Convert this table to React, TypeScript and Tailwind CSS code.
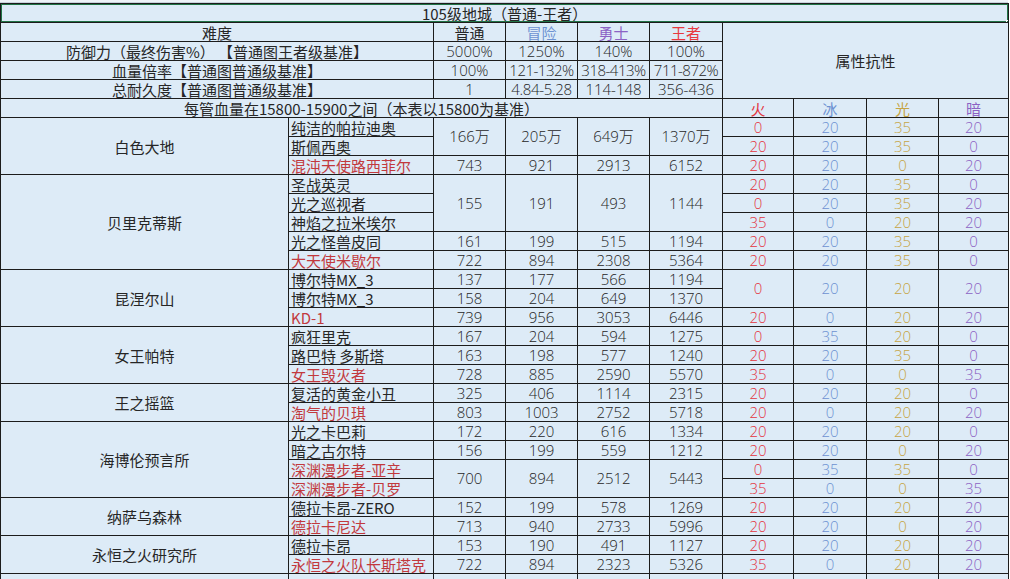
import React from "react";

type Row = {
  group?: [string, number];
  name: string;
  red?: boolean;
  nums?: [string[], number];
  attrs?: [string[], number];
};

const rows: Row[] = [
  { group: ["白色大地", 3], name: "纯洁的帕拉迪奥", nums: [["166万", "205万", "649万", "1370万"], 2], attrs: [["0", "20", "35", "20"], 1] },
  { name: "斯佩西奥", attrs: [["20", "20", "35", "0"], 1] },
  { name: "混沌天使路西菲尔", red: true, nums: [["743", "921", "2913", "6152"], 1], attrs: [["20", "20", "0", "20"], 1] },
  { group: ["贝里克蒂斯", 5], name: "圣战英灵", nums: [["155", "191", "493", "1144"], 3], attrs: [["20", "20", "35", "0"], 1] },
  { name: "光之巡视者", attrs: [["0", "20", "35", "20"], 1] },
  { name: "神焰之拉米埃尔", attrs: [["35", "0", "20", "20"], 1] },
  { name: "光之怪兽皮同", nums: [["161", "199", "515", "1194"], 1], attrs: [["20", "20", "35", "0"], 1] },
  { name: "大天使米歇尔", red: true, nums: [["722", "894", "2308", "5364"], 1], attrs: [["20", "20", "35", "0"], 1] },
  { group: ["昆涅尔山", 3], name: "博尔特MX_3", nums: [["137", "177", "566", "1194"], 1], attrs: [["0", "20", "20", "20"], 2] },
  { name: "博尔特MX_3", nums: [["158", "204", "649", "1370"], 1] },
  { name: "KD-1", red: true, nums: [["739", "956", "3053", "6446"], 1], attrs: [["20", "0", "20", "20"], 1] },
  { group: ["女王帕特", 3], name: "疯狂里克", nums: [["167", "204", "594", "1275"], 1], attrs: [["0", "35", "20", "0"], 1] },
  { name: "路巴特 多斯塔", nums: [["163", "198", "577", "1240"], 1], attrs: [["20", "20", "35", "0"], 1] },
  { name: "女王毁灭者", red: true, nums: [["728", "885", "2590", "5570"], 1], attrs: [["35", "0", "0", "35"], 1] },
  { group: ["王之摇篮", 2], name: "复活的黄金小丑", nums: [["325", "406", "1114", "2315"], 1], attrs: [["20", "20", "20", "0"], 1] },
  { name: "淘气的贝琪", red: true, nums: [["803", "1003", "2752", "5718"], 1], attrs: [["20", "0", "20", "20"], 1] },
  { group: ["海博伦预言所", 4], name: "光之卡巴莉", nums: [["172", "220", "616", "1334"], 1], attrs: [["20", "20", "20", "0"], 1] },
  { name: "暗之古尔特", nums: [["156", "199", "559", "1212"], 1], attrs: [["20", "20", "0", "20"], 1] },
  { name: "深渊漫步者-亚辛", red: true, nums: [["700", "894", "2512", "5443"], 2], attrs: [["0", "35", "35", "0"], 1] },
  { name: "深渊漫步者-贝罗", red: true, attrs: [["35", "0", "0", "35"], 1] },
  { group: ["纳萨乌森林", 2], name: "德拉卡昂-ZERO", nums: [["152", "199", "578", "1269"], 1], attrs: [["20", "20", "20", "20"], 1] },
  { name: "德拉卡尼达", red: true, nums: [["713", "940", "2733", "5996"], 1], attrs: [["20", "20", "0", "20"], 1] },
  { group: ["永恒之火研究所", 2], name: "德拉卡昂", nums: [["153", "190", "491", "1127"], 1], attrs: [["20", "20", "20", "20"], 1] },
  { name: "永恒之火队长斯塔克", red: true, nums: [["722", "894", "2323", "5326"], 1], attrs: [["35", "0", "20", "20"], 1] },
];

const attrColors = ["text-[#e3343e]", "text-[#6d92d2]", "text-[#c6a443]", "text-[#8c62c4]"];

const td = "border border-[#1c1c1c] h-[19px] p-0 leading-[17px] whitespace-nowrap overflow-hidden";
const num = "font-['Open_Sans','Noto_Sans_CJK_SC',sans-serif] font-light text-[15px]";

export default function App() {
  return (
    <div
      className="w-[1010px] h-[579px] overflow-hidden bg-white text-[#262626]"
      style={{ fontFamily: '"Noto Sans CJK SC", "Noto Sans", sans-serif' }}
    >
      <div className="h-[3px] w-[1008px] bg-[#eef3f8] border-b border-[#c8d2dc]" />
      <table className="border-collapse table-fixed w-[1008px] bg-[#ddebf7] text-[15px]">
        <colgroup>
          <col className="w-[288px]" />
          <col className="w-[145px]" />
          <col className="w-[72px]" />
          <col className="w-[72px]" />
          <col className="w-[72px]" />
          <col className="w-[73px]" />
          <col className="w-[71px]" />
          <col className="w-[73px]" />
          <col className="w-[72px]" />
          <col className="w-[70px]" />
        </colgroup>
        <tbody>
          <tr>
            <td colSpan={10} className={`${td} text-center relative`}>
              105级地城（普通-王者）
              <div className="absolute -top-px -left-px -right-px -bottom-px border-2 border-[#217346] pointer-events-none" />
              <div className="absolute -right-[3px] -bottom-[3px] w-[5px] h-[5px] bg-[#217346] border border-white" />
            </td>
          </tr>
          <tr>
            <td colSpan={2} className={`${td} text-center`}>难度</td>
            <td className={`${td} text-center`}>普通</td>
            <td className={`${td} text-center text-[#6d92d2]`}>冒险</td>
            <td className={`${td} text-center text-[#8c62c4]`}>勇士</td>
            <td className={`${td} text-center text-[#e8383f]`}>王者</td>
            <td colSpan={4} rowSpan={4} className={`${td} text-center`}>属性抗性</td>
          </tr>
          <tr>
            <td colSpan={2} className={`${td} text-center`}>防御力（最终伤害%） 【普通图王者级基准】</td>
            <td className={`${td} text-center ${num}`}>5000%</td>
            <td className={`${td} text-center ${num}`}>1250%</td>
            <td className={`${td} text-center ${num}`}>140%</td>
            <td className={`${td} text-center ${num}`}>100%</td>
          </tr>
          <tr>
            <td colSpan={2} className={`${td} text-center`}>血量倍率【普通图普通级基准】</td>
            <td className={`${td} text-center ${num}`}>100%</td>
            <td className={`${td} text-center ${num} tracking-[-0.5px]`}>121-132%</td>
            <td className={`${td} text-center ${num} tracking-[-0.5px]`}>318-413%</td>
            <td className={`${td} text-center ${num} tracking-[-0.5px]`}>711-872%</td>
          </tr>
          <tr>
            <td colSpan={2} className={`${td} text-center`}>总耐久度【普通图普通级基准】</td>
            <td className={`${td} text-center ${num}`}>1</td>
            <td className={`${td} text-center ${num} tracking-[-0.3px]`}>4.84-5.28</td>
            <td className={`${td} text-center ${num}`}>114-148</td>
            <td className={`${td} text-center ${num}`}>356-436</td>
          </tr>
          <tr>
            <td colSpan={6} className={`${td} text-center`}>每管血量在15800-15900之间（本表以15800为基准）</td>
            <td className={`${td} text-center ${attrColors[0]}`}>火</td>
            <td className={`${td} text-center ${attrColors[1]}`}>冰</td>
            <td className={`${td} text-center ${attrColors[2]}`}>光</td>
            <td className={`${td} text-center ${attrColors[3]}`}>暗</td>
          </tr>
          {rows.map((r, i) => (
            <tr key={i}>
              {r.group && (
                <td rowSpan={r.group[1]} className={`${td} text-center`}>
                  {r.group[0]}
                </td>
              )}
              <td className={`${td} text-left pl-[2px] ${r.red ? "text-[#c2393d]" : ""}`}>{r.name}</td>
              {r.nums &&
                r.nums[0].map((v, j) => (
                  <td key={j} rowSpan={r.nums![1]} className={`${td} text-center ${num}`}>
                    {v}
                  </td>
                ))}
              {r.attrs &&
                r.attrs[0].map((v, j) => (
                  <td key={j} rowSpan={r.attrs![1]} className={`${td} text-center ${num} ${attrColors[j]}`}>
                    {v}
                  </td>
                ))}
            </tr>
          ))}
          <tr>
            <td className={td}></td>
            <td className={td}></td>
            <td className={td}></td>
            <td className={td}></td>
            <td className={td}></td>
            <td className={td}></td>
            <td className={td}></td>
            <td className={td}></td>
            <td className={td}></td>
            <td className={td}></td>
          </tr>
        </tbody>
      </table>
    </div>
  );
}
